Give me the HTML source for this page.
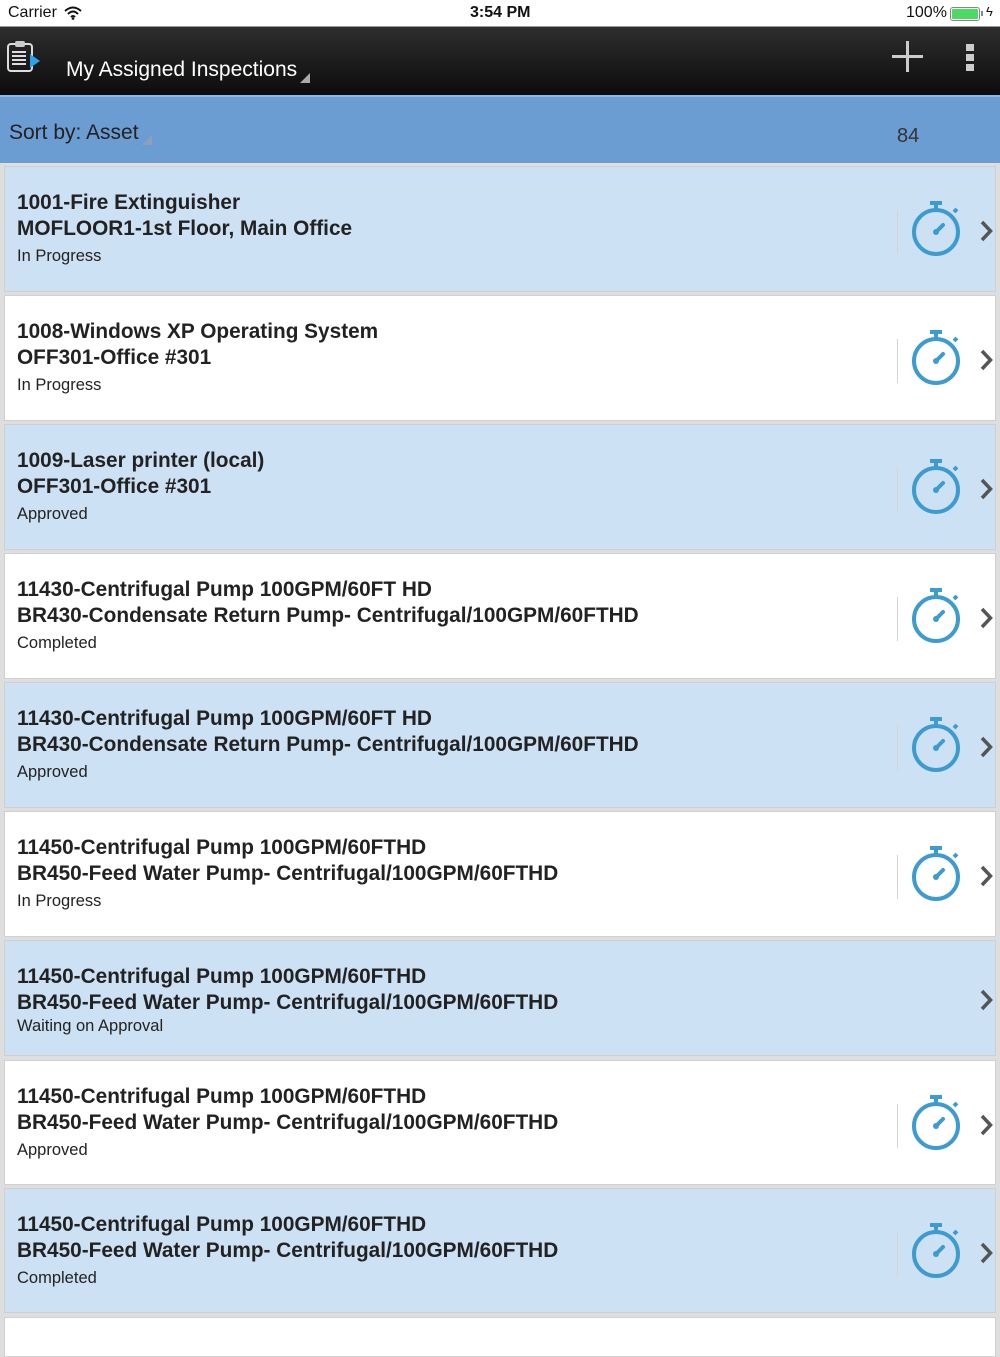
<!DOCTYPE html>
<html><head><meta charset="utf-8"><style>
*{margin:0;padding:0;box-sizing:border-box}
body{width:1000px;height:1334px;overflow:hidden;background:#dedede;font-family:"Liberation Sans",Arial,sans-serif;position:relative}
.sb{position:absolute;left:0;top:0;width:1000px;height:27px;background:#fff;border-bottom:1px solid #999;font-size:16px;color:#111}
.nav{position:absolute;left:0;top:27px;width:1000px;height:68px;background:linear-gradient(#2e2e2e,#0c0c0c)}
.sort{position:absolute;left:0;top:95px;width:1000px;height:68px;background:#6c9dd2;border-top:2px solid #8cb8e6}
.row{position:absolute;left:4px;width:992px;border:1px solid #d0d0d0}
.row.b{background:#cde1f4}.row.w{background:#fff}
.t{position:absolute;left:12px;font-size:20.8px;font-weight:bold;color:#222;line-height:26px}
.s{position:absolute;left:12px;font-size:16.5px;color:#222}
.div{position:absolute;left:892px;width:1px;height:44px;background:#d4d4d4}
.ic{position:absolute;left:905px}
.ch{position:absolute;left:973px}
</style></head><body>
<div class="sb">
<span style="position:absolute;left:8px;top:4px">Carrier</span>
<svg style="position:absolute;left:64px;top:6px" width="18" height="14" viewBox="0 0 18 14"><path d="M1 5Q9 -2 17 5M4 8Q9 3 14 8M7 11Q9 9 11 11" stroke="#111" stroke-width="2" fill="none"/><circle cx="9" cy="12.5" r="1.3" fill="#111"/></svg>
<span style="position:absolute;left:470px;top:4px;font-weight:bold">3:54 PM</span>
<span style="position:absolute;left:906px;top:4px">100%</span>
<div style="position:absolute;left:950px;top:7px;width:30px;height:14px;border:1px solid #888;border-radius:3px;padding:1px"><div style="width:100%;height:100%;background:#4cd964;border-radius:1px"></div></div>
<div style="position:absolute;left:981px;top:11px;width:2px;height:5px;background:#888"></div>
<span style="position:absolute;left:986px;top:4px;font-size:13px">ϟ</span>
</div>
<div class="nav">
<svg style="position:absolute;left:6px;top:13px" width="34" height="34" viewBox="0 0 34 34"><rect x="2" y="4" width="24" height="27" rx="3" fill="none" stroke="#ddd" stroke-width="2"/><rect x="9" y="1" width="10" height="6" rx="2" fill="#ccc"/><path d="M6 12h14M6 16h14M6 20h14M6 24h14" stroke="#ddd" stroke-width="2"/><path d="M24 14l10 7-10 7z" fill="#2aa3e8"/></svg>
<span style="position:absolute;left:66px;top:31px;font-size:21px;color:#fff">My Assigned Inspections</span>
<div style="position:absolute;left:300px;top:46px;width:0;height:0;border-left:10px solid transparent;border-bottom:10px solid #aaa"></div>
<div style="position:absolute;left:892px;top:28px;width:31px;height:3px;background:#ccc"></div>
<div style="position:absolute;left:906px;top:14px;width:3px;height:31px;background:#ccc"></div>
<div style="position:absolute;left:966px;top:17px;width:8px;height:7px;background:#ccc"></div>
<div style="position:absolute;left:966px;top:27px;width:8px;height:7px;background:#ccc"></div>
<div style="position:absolute;left:966px;top:37px;width:8px;height:7px;background:#ccc"></div>
</div>
<div class="sort">
<span style="position:absolute;left:9px;top:24px;font-size:21px;color:#222">Sort by: Asset</span>
<div style="position:absolute;left:142px;top:38px;width:0;height:0;border-left:10px solid transparent;border-bottom:10px solid #8aa0b8"></div>
<span style="position:absolute;left:897px;top:28px;font-size:20px;color:#333">84</span>
</div>
<div id="rows"></div>
<script>
var data=[
[166,126,"b","1001-Fire Extinguisher","MOFLOOR1-1st Floor, Main Office","In Progress",1],
[295,126,"w","1008-Windows XP Operating System","OFF301-Office #301","In Progress",1],
[424,126,"b","1009-Laser printer (local)","OFF301-Office #301","Approved",1],
[553,126,"w","11430-Centrifugal Pump 100GPM/60FT HD","BR430-Condensate Return Pump- Centrifugal/100GPM/60FTHD","Completed",1],
[682,126,"b","11430-Centrifugal Pump 100GPM/60FT HD","BR430-Condensate Return Pump- Centrifugal/100GPM/60FTHD","Approved",1],
[811,126,"w","11450-Centrifugal Pump 100GPM/60FTHD","BR450-Feed Water Pump- Centrifugal/100GPM/60FTHD","In Progress",1],
[940,116,"b","11450-Centrifugal Pump 100GPM/60FTHD","BR450-Feed Water Pump- Centrifugal/100GPM/60FTHD","Waiting on Approval",0],
[1060,125,"w","11450-Centrifugal Pump 100GPM/60FTHD","BR450-Feed Water Pump- Centrifugal/100GPM/60FTHD","Approved",1],
[1188,125,"b","11450-Centrifugal Pump 100GPM/60FTHD","BR450-Feed Water Pump- Centrifugal/100GPM/60FTHD","Completed",1],
[1317,40,"w","","","",0]];
var h="";
data.forEach(function(d){
var y=d[0],hh=d[1],wa=d[5]=="Waiting on Approval";
h+='<div class="row '+d[2]+'" style="top:'+y+'px;height:'+hh+'px">';
if(d[3]){
h+='<div class="t" style="top:23px">'+d[3]+'<br>'+d[4]+'</div>';
h+='<div class="s" style="top:'+(wa?76:80)+'px">'+d[5]+'</div>';
var cy=wa?58:63;
if(d[6]){
h+='<div class="div" style="top:'+(cy-20)+'px"></div>';
h+='<svg class="ic" style="top:'+(cy-33)+'px" width="52" height="60" viewBox="0 0 52 60"><g stroke="#3d9bd0" fill="none" stroke-width="4"><circle cx="26" cy="35" r="22"/><path d="M26 13V7M20 6h12M44 15l3-3"/><path d="M26 35l7-7" stroke-linecap="round"/></g><circle cx="26" cy="35" r="3" fill="#3d9bd0"/></svg>';}
h+='<svg class="ch" style="top:'+(cy-11)+'px" width="16" height="24" viewBox="0 0 16 24"><path d="M4 3l8.5 9L4 21" stroke="#555" stroke-width="3.5" fill="none"/></svg>';
}
h+='</div>';});
document.getElementById("rows").innerHTML=h;
</script>
</body></html>
